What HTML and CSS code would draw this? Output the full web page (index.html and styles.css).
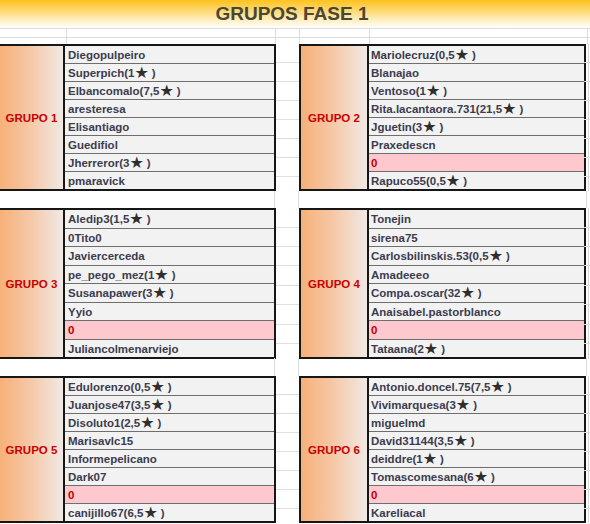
FILE: index.html
```html
<!DOCTYPE html>
<html lang="es">
<head>
<meta charset="utf-8">
<title>Grupos Fase 1</title>
<link rel="stylesheet" href="styles.css">
</head>
<body>
<div class="sheet">
  <header class="title">GRUPOS FASE 1</header>
  <div class="head-grid">
    <div class="hg hg-a"></div><div class="hg hg-b"></div><div class="hg hg-c"></div><div class="hg hg-d"></div><div class="hg hg-e"></div>
  </div>

  <section class="band band-1">
    <div class="group group-left">
      <div class="label">GRUPO 1</div>
      <div class="cells">
        <div class="cell">Diegopulpeiro</div>
        <div class="cell">Superpich(1<span class="star">★</span>)</div>
        <div class="cell">Elbancomalo(7,5<span class="star">★</span>)</div>
        <div class="cell">aresteresa</div>
        <div class="cell">Elisantiago</div>
        <div class="cell">Guedifiol</div>
        <div class="cell">Jherreror(3<span class="star">★</span>)</div>
        <div class="cell">pmaravick</div>
      </div>
    </div>
    <div class="gutter"></div>
    <div class="group group-right">
      <div class="label">GRUPO 2</div>
      <div class="cells">
        <div class="cell">Mariolecruz(0,5<span class="star">★</span>)</div>
        <div class="cell">Blanajao</div>
        <div class="cell">Ventoso(1<span class="star">★</span>)</div>
        <div class="cell">Rita.lacantaora.731(21,5<span class="star">★</span>)</div>
        <div class="cell">Jguetin(3<span class="star">★</span>)</div>
        <div class="cell">Praxedescn</div>
        <div class="cell cell-empty">0</div>
        <div class="cell">Rapuco55(0,5<span class="star">★</span>)</div>
      </div>
    </div>
    <div class="edge"></div>
  </section>

  <div class="spacer spacer-1"><div class="sp sp-a"></div><div class="sp sp-b"></div><div class="sp sp-c"></div></div>

  <section class="band band-2">
    <div class="group group-left">
      <div class="label">GRUPO 3</div>
      <div class="cells">
        <div class="cell">Aledip3(1,5<span class="star">★</span>)</div>
        <div class="cell">0Tito0</div>
        <div class="cell">Javiercerceda</div>
        <div class="cell">pe_pego_mez(1<span class="star">★</span>)</div>
        <div class="cell">Susanapawer(3<span class="star">★</span>)</div>
        <div class="cell">Yyio</div>
        <div class="cell cell-empty">0</div>
        <div class="cell">Juliancolmenarviejo</div>
      </div>
    </div>
    <div class="gutter"></div>
    <div class="group group-right">
      <div class="label">GRUPO 4</div>
      <div class="cells">
        <div class="cell">Tonejin</div>
        <div class="cell">sirena75</div>
        <div class="cell">Carlosbilinskis.53(0,5<span class="star">★</span>)</div>
        <div class="cell">Amadeeeo</div>
        <div class="cell">Compa.oscar(32<span class="star">★</span>)</div>
        <div class="cell">Anaisabel.pastorblanco</div>
        <div class="cell cell-empty">0</div>
        <div class="cell">Tataana(2<span class="star">★</span>)</div>
      </div>
    </div>
    <div class="edge"></div>
  </section>

  <div class="spacer spacer-2"><div class="sp sp-a"></div><div class="sp sp-b"></div><div class="sp sp-c"></div></div>

  <section class="band band-3">
    <div class="group group-left">
      <div class="label">GRUPO 5</div>
      <div class="cells">
        <div class="cell">Edulorenzo(0,5<span class="star">★</span>)</div>
        <div class="cell">Juanjose47(3,5<span class="star">★</span>)</div>
        <div class="cell">Disoluto1(2,5<span class="star">★</span>)</div>
        <div class="cell">Marisavlc15</div>
        <div class="cell">Informepelicano</div>
        <div class="cell">Dark07</div>
        <div class="cell cell-empty">0</div>
        <div class="cell">canijillo67(6,5<span class="star">★</span>)</div>
      </div>
    </div>
    <div class="gutter"></div>
    <div class="group group-right">
      <div class="label">GRUPO 6</div>
      <div class="cells">
        <div class="cell">Antonio.doncel.75(7,5<span class="star">★</span>)</div>
        <div class="cell">Vivimarquesa(3<span class="star">★</span>)</div>
        <div class="cell">miguelmd</div>
        <div class="cell">David31144(3,5<span class="star">★</span>)</div>
        <div class="cell">deiddre(1<span class="star">★</span>)</div>
        <div class="cell">Tomascomesana(6<span class="star">★</span>)</div>
        <div class="cell cell-empty">0</div>
        <div class="cell">Kareliacal</div>
      </div>
    </div>
    <div class="edge"></div>
  </section>
</div>
</body>
</html>
```

FILE: styles.css
```css
* { box-sizing: border-box; }

html, body {
  margin: 0;
  padding: 0;
  background: #ffffff;
}

body {
  font-family: "Liberation Sans", Arial, sans-serif;
  width: 590px;
  height: 524px;
  overflow: hidden;
}

.sheet {
  width: 590px;
  display: flex;
  flex-direction: column;
}

.title {
  height: 28px;
  background: linear-gradient(to bottom, #fdc21f 0%, #fed66a 35%, #ffeebd 70%, #ffffff 100%);
  color: #4a4636;
  font-weight: bold;
  font-size: 19px;
  line-height: 28px;
  text-align: center;
  padding-right: 6px;
}

.head-grid {
  height: 16px;
  display: grid;
  grid-template-columns: 67px 209px 24px 70px 218px 2px;
  border-top: 1px solid #dcdcdc;
  background: linear-gradient(to bottom, transparent 8px, #dcdcdc 8px, #dcdcdc 9px, transparent 9px);
}

.hg { border-right: 1px solid #dcdcdc; }

.band {
  display: grid;
  grid-template-columns: 276px 23px 287px 4px;
}

.band-1 { height: 147px; --row: 17px; }
.band-2 { height: 150px; --row: 17.5px; }
.band-3 { height: 147px; --row: 17px; }

.group {
  border: 2px solid #161616;
  display: grid;
  height: 100%;
}

.group-left {
  width: 278px;
  margin-left: -2px;
  grid-template-columns: 65px 1fr;
}

.group-right {
  grid-template-columns: 68px 1fr;
}

.label {
  border-right: 2px solid #161616;
  background: linear-gradient(to right, #f7b07a 0%, #f6c6a3 45%, #f0e9e4 100%);
  color: #c80000;
  font-weight: bold;
  font-size: 11.5px;
  display: flex;
  align-items: center;
  justify-content: center;
  padding-top: 1px;
}

.cells {
  display: grid;
  grid-template-rows: repeat(8, var(--row));
  row-gap: 1px;
  background: #6e6e6e;
}

.cell {
  background: #f2f2f2;
  color: #3c3c4e;
  font-weight: bold;
  font-size: 11.5px;
  line-height: var(--row);
  padding-left: 3px;
  padding-top: 1px;
  white-space: nowrap;
}

.group-right .cell { padding-left: 2px; }

.cell-empty {
  background: #ffc7ce;
  color: #c00000;
}

.star {
  font-family: "DejaVu Sans", sans-serif;
  font-size: 16px;
  color: #2e2e2e;
  margin-right: 3px;
  line-height: 0;
  vertical-align: -1px;
}

.gutter, .edge {
  background: repeating-linear-gradient(to bottom, transparent 0, transparent calc(var(--row) + 1px), #e0e0e0 calc(var(--row) + 1px), #e0e0e0 calc(var(--row) + 2px));
}

.edge {
  margin-left: -2px;
  width: 6px;
}

.edge::after {
  content: "";
  display: block;
  margin-left: 4px;
  width: 1px;
  height: 100%;
  background: #d6d6d6;
}

.spacer {
  display: grid;
  grid-template-columns: 275px 24px 288px 3px;
}

.spacer-1 { height: 17px; }
.spacer-2 { height: 18px; }

.sp { border-right: 1px solid #dcdcdc; }
```
